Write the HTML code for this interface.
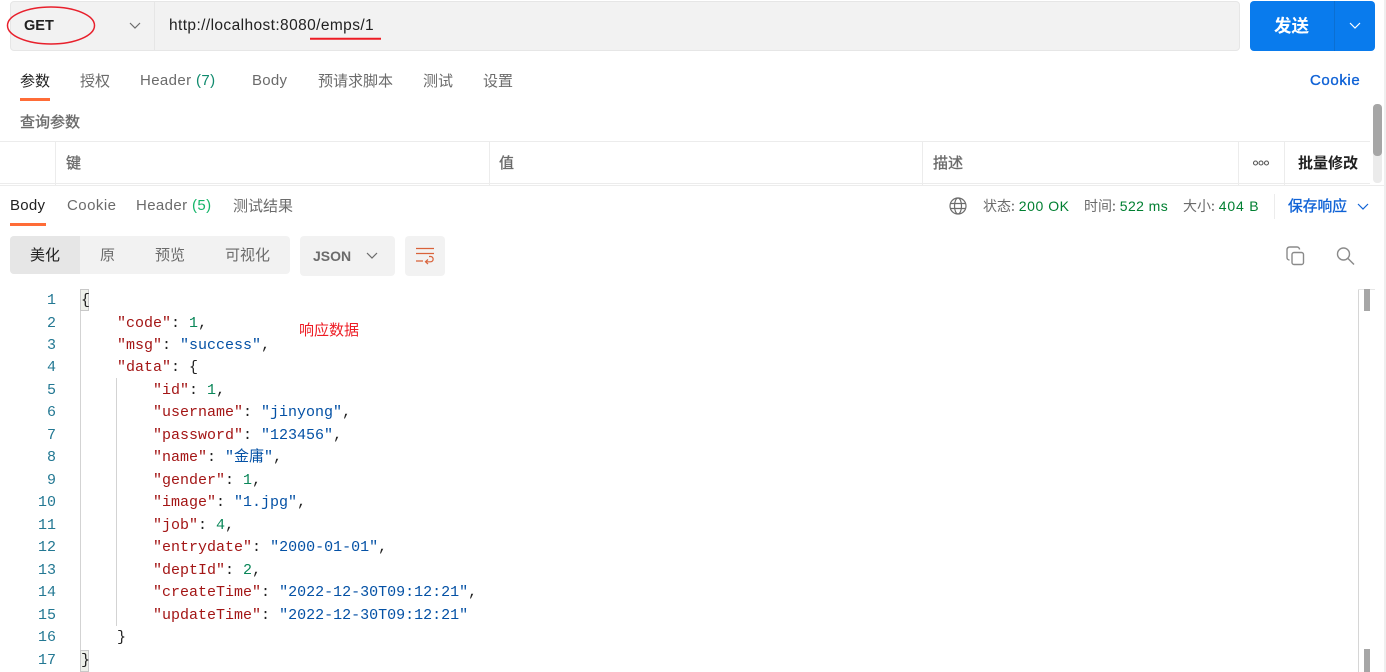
<!DOCTYPE html>
<html><head><meta charset="utf-8"><style>
html,body{margin:0;padding:0;background:#fff;width:1386px;height:672px;overflow:hidden}
body{position:relative;font-family:"Liberation Sans","Noto Sans CJK SC",sans-serif;font-size:14.5px;color:#6b6b6b}
.a{position:absolute;white-space:nowrap}
.t{position:absolute;white-space:nowrap;line-height:20px;height:20px}
.cn{font-family:"Noto Sans CJK SC",sans-serif}
.m{-webkit-text-stroke:.35px currentColor}
.ln{position:absolute;width:56px;left:0;text-align:right;font:15px/22px "Liberation Mono",monospace;color:#237893;white-space:pre}
.c{position:absolute;left:81px;font:15px/22px "Liberation Mono","Noto Sans CJK SC",monospace;color:#212121;white-space:pre}
.k{color:#a31515}.s{color:#0451a5}.n{color:#098658}
.g{color:#007f31}
</style></head><body>
<!-- URL bar -->
<div class="a" style="left:10px;top:1px;width:1228px;height:48px;background:#f2f2f2;border:1px solid #e6e6e6;border-radius:4px;box-sizing:content-box"></div>
<div class="a" style="left:154px;top:2px;width:1px;height:48px;background:#e6e6e6"></div>
<div class="t" style="left:24px;top:16px;font-weight:bold;color:#212121;font-size:14.500px">GET</div>
<svg class="a" style="left:129px;top:21px" width="12" height="10" viewBox="0 0 12 10"><path d="M1 2l5 5 5-5" fill="none" stroke="#6b6b6b" stroke-width="1.2"/></svg>
<div class="t" style="left:169px;top:16px;color:#212121;font-size:15.500px;letter-spacing:.4px">http://localhost:8080/emps/1</div>
<svg class="a" style="left:0;top:0" width="400" height="50"><ellipse cx="51" cy="25.500" rx="43.500" ry="18.500" fill="none" stroke="#e8202c" stroke-width="1.500"/><path d="M310 38.700H381" stroke="#ed1c24" stroke-width="2"/></svg>
<div class="a" style="left:1250px;top:1px;width:125px;height:50px;background:#097bed;border-radius:4px"></div>
<div class="a" style="left:1334px;top:1px;width:1px;height:50px;background:#0b6fd2"></div>
<div class="t cn" style="left:1274px;top:16px;color:#fff;font-weight:700;font-size:17.500px">发送</div>
<svg class="a" style="left:1349px;top:22px" width="12" height="8" viewBox="0 0 12 8"><path d="M1 1l5 5 5-5" fill="none" stroke="#fff" stroke-width="1.200"/></svg>
<div class="a" style="left:1384px;top:0;width:2px;height:672px;background:#efefef"></div>
<!-- request tabs -->
<div class="t cn" style="left:20px;top:71px;color:#212121;font-size:15px">参数</div>
<div class="a" style="left:20px;top:98px;width:30px;height:3px;background:#ff6c37"></div>
<div class="t cn" style="left:80px;top:71px;font-size:15px">授权</div>
<div class="t" style="left:140px;top:71px;font-size:15px;letter-spacing:.38px">Header <span style="color:#0f8a6d">(7)</span></div>
<div class="t" style="left:252px;top:71px;font-size:15px;letter-spacing:.25px">Body</div>
<div class="t cn" style="left:318px;top:71px;font-size:15px">预请求脚本</div>
<div class="t cn" style="left:423px;top:71px;font-size:15px">测试</div>
<div class="t cn" style="left:483px;top:71px;font-size:15px">设置</div>
<div class="t m" style="left:1310px;top:71px;color:#0f62d6;font-size:15px;letter-spacing:.6px">Cookie</div>
<div class="t cn m" style="left:20px;top:112px;font-size:15px">查询参数</div>
<!-- table -->
<div class="a" style="left:0;top:141px;width:1370px;height:1px;background:#ececec"></div>
<div class="a" style="left:0;top:183px;width:1370px;height:1px;background:#ececec"></div>
<div class="a" style="left:0;top:185px;width:1384px;height:1px;background:#ececec"></div>
<div class="a" style="left:55px;top:142px;width:1px;height:43px;background:#ececec"></div>
<div class="a" style="left:489px;top:142px;width:1px;height:43px;background:#ececec"></div>
<div class="a" style="left:922px;top:142px;width:1px;height:43px;background:#ececec"></div>
<div class="a" style="left:1238px;top:142px;width:1px;height:43px;background:#ececec"></div>
<div class="a" style="left:1284px;top:142px;width:1px;height:43px;background:#ececec"></div>
<div class="t cn m" style="left:66px;top:153px;font-size:15px">键</div>
<div class="t cn m" style="left:499px;top:153px;font-size:15px">值</div>
<div class="t cn m" style="left:933px;top:153px;font-size:15px">描述</div>
<svg class="a" style="left:1252px;top:159px" width="20" height="8"><g fill="none" stroke="#555" stroke-width="1.100"><circle cx="3.500" cy="4" r="2"/><circle cx="9" cy="4" r="2"/><circle cx="14.500" cy="4" r="2"/></g></svg>
<div class="t cn" style="left:1298px;top:153px;font-size:15px;font-weight:700;color:#212121">批量修改</div>
<div class="a" style="left:1373px;top:104px;width:9px;height:79px;background:#ebebeb;border-radius:4px"></div>
<div class="a" style="left:1373px;top:104px;width:9px;height:52px;background:#a6a6a6;border-radius:4px"></div>
<!-- response tabs -->
<div class="t" style="left:10px;top:196px;color:#212121;font-size:15px;letter-spacing:.25px">Body</div>
<div class="a" style="left:10px;top:223px;width:36px;height:3px;background:#ff6c37"></div>
<div class="t" style="left:67px;top:196px;font-size:15px;letter-spacing:.45px">Cookie</div>
<div class="t" style="left:136px;top:196px;font-size:15px;letter-spacing:.38px">Header <span style="color:#15b56a">(5)</span></div>
<div class="t cn" style="left:233px;top:196px;font-size:15px">测试结果</div>
<svg class="a" style="left:949px;top:197px" width="18" height="18" viewBox="0 0 18 18"><g fill="none" stroke="#6b6b6b" stroke-width="1.200"><circle cx="9" cy="9" r="8"/><ellipse cx="9" cy="9" rx="3.500" ry="8"/><path d="M1.500 6.500h15M1.500 11.500h15"/></g></svg>
<div class="t" style="left:983px;top:196px;font-size:14px"><span class="cn">状态:</span> <span class="g" style="letter-spacing:.55px">200 OK</span></div>
<div class="t" style="left:1084px;top:196px;font-size:14px"><span class="cn">时间:</span> <span class="g" style="letter-spacing:.4px">522 ms</span></div>
<div class="t" style="left:1183px;top:196px;font-size:14px"><span class="cn">大小:</span> <span class="g" style="letter-spacing:.8px">404 B</span></div>
<div class="a" style="left:1274px;top:194px;width:1px;height:25px;background:#ececec"></div>
<div class="t cn m" style="left:1288px;top:196px;color:#0f62d6;font-size:14.750px">保存响应</div>
<svg class="a" style="left:1357px;top:203px" width="12" height="8" viewBox="0 0 12 8"><path d="M1 1l5 5 5-5" fill="none" stroke="#0f62d6" stroke-width="1.200"/></svg>
<!-- view controls -->
<div class="a" style="left:10px;top:236px;width:280px;height:38px;background:#f2f2f2;border-radius:4px"></div>
<div class="a" style="left:10px;top:236px;width:70px;height:38px;background:#e6e6e6;border-radius:4px 0 0 4px"></div>
<div class="t cn" style="left:30px;top:245px;color:#212121;font-size:15px">美化</div>
<div class="t cn" style="left:100px;top:245px;font-size:15px">原</div>
<div class="t cn" style="left:155px;top:245px;font-size:15px">预览</div>
<div class="t cn" style="left:225px;top:245px;font-size:15px">可视化</div>
<div class="a" style="left:300px;top:236px;width:95px;height:40px;background:#f2f2f2;border-radius:4px"></div>
<div class="t" style="left:313px;top:246px;font-size:14px;font-weight:bold;color:#6b6b6b">JSON</div>
<svg class="a" style="left:366px;top:252px" width="12" height="8" viewBox="0 0 12 8"><path d="M1 1l5 5 5-5" fill="none" stroke="#6b6b6b" stroke-width="1.200"/></svg>
<div class="a" style="left:405px;top:236px;width:40px;height:40px;background:#f2f2f2;border-radius:4px"></div>
<svg class="a" style="left:415px;top:247px" width="20" height="18" viewBox="0 0 20 18"><path d="M1 1.500H19M1 6.500H19M1 14H8M11.500 14.800H15.500c3.500 0 3.500-5.300 0-5.300H14M13 12.500l-2.500 2.300 2.500 2.300" fill="none" stroke="#d9623a" stroke-width="1.200"/></svg>
<svg class="a" style="left:1286px;top:246px" width="19" height="20" viewBox="0 0 19 20"><g fill="none" stroke="#8a8a8a" stroke-width="1.400"><rect x="6" y="6.500" width="11.500" height="12" rx="2"/><path d="M3.500 14C2 14 1 13 1 11.500V4C1 2 2 1 4 1h7c1.500 0 2.500 1 2.500 2.500"/></g></svg>
<svg class="a" style="left:1336px;top:247px" width="19" height="19" viewBox="0 0 19 19"><g fill="none" stroke="#8a8a8a" stroke-width="1.400"><circle cx="7.500" cy="7" r="6"/><path d="M12 11.500l6 6"/></g></svg>
<!-- gutter guides -->
<div class="a" style="left:80px;top:310px;width:1px;height:362px;background:#d3d3d3"></div>
<div class="a" style="left:116px;top:378px;width:1px;height:248px;background:#d3d3d3"></div>
<div class="a" style="left:80px;top:289px;width:9px;height:22px;background:#eef0ea;border:1px solid #c8c8c8;box-sizing:border-box"></div>
<div class="a" style="left:80px;top:650px;width:9px;height:22px;background:#eef0ea;border:1px solid #c8c8c8;box-sizing:border-box"></div>
<!-- code -->
<div class="ln" style="top:290px">1</div><div class="c" style="top:290px">{</div>
<div class="ln" style="top:313px">2</div><div class="c" style="top:313px">    <span class="k">"code"</span>: <span class="n">1</span>,</div>
<div class="ln" style="top:335px">3</div><div class="c" style="top:335px">    <span class="k">"msg"</span>: <span class="s">"success"</span>,</div>
<div class="ln" style="top:357px">4</div><div class="c" style="top:357px">    <span class="k">"data"</span>: {</div>
<div class="ln" style="top:380px">5</div><div class="c" style="top:380px">        <span class="k">"id"</span>: <span class="n">1</span>,</div>
<div class="ln" style="top:402px">6</div><div class="c" style="top:402px">        <span class="k">"username"</span>: <span class="s">"jinyong"</span>,</div>
<div class="ln" style="top:425px">7</div><div class="c" style="top:425px">        <span class="k">"password"</span>: <span class="s">"123456"</span>,</div>
<div class="ln" style="top:447px">8</div><div class="c" style="top:447px">        <span class="k">"name"</span>: <span class="s">"金庸"</span>,</div>
<div class="ln" style="top:470px">9</div><div class="c" style="top:470px">        <span class="k">"gender"</span>: <span class="n">1</span>,</div>
<div class="ln" style="top:492px">10</div><div class="c" style="top:492px">        <span class="k">"image"</span>: <span class="s">"1.jpg"</span>,</div>
<div class="ln" style="top:515px">11</div><div class="c" style="top:515px">        <span class="k">"job"</span>: <span class="n">4</span>,</div>
<div class="ln" style="top:537px">12</div><div class="c" style="top:537px">        <span class="k">"entrydate"</span>: <span class="s">"2000-01-01"</span>,</div>
<div class="ln" style="top:560px">13</div><div class="c" style="top:560px">        <span class="k">"deptId"</span>: <span class="n">2</span>,</div>
<div class="ln" style="top:582px">14</div><div class="c" style="top:582px">        <span class="k">"createTime"</span>: <span class="s">"2022-12-30T09:12:21"</span>,</div>
<div class="ln" style="top:605px">15</div><div class="c" style="top:605px">        <span class="k">"updateTime"</span>: <span class="s">"2022-12-30T09:12:21"</span></div>
<div class="ln" style="top:627px">16</div><div class="c" style="top:627px">    }</div>
<div class="ln" style="top:650px">17</div><div class="c" style="top:650px">}</div>
<div class="t cn" style="left:299px;top:320px;color:#ed1c24;font-size:15px">响应数据</div>
<!-- code scrollbar -->
<div class="a" style="left:1358px;top:289px;width:1px;height:383px;background:#d6d6d6"></div>
<div class="a" style="left:1358px;top:289px;width:17px;height:1px;background:#e6e6e6"></div>
<div class="a" style="left:1364px;top:289px;width:6px;height:22px;background:#a6a6a6"></div>
<div class="a" style="left:1364px;top:649px;width:6px;height:23px;background:#a6a6a6"></div>
</body></html>
